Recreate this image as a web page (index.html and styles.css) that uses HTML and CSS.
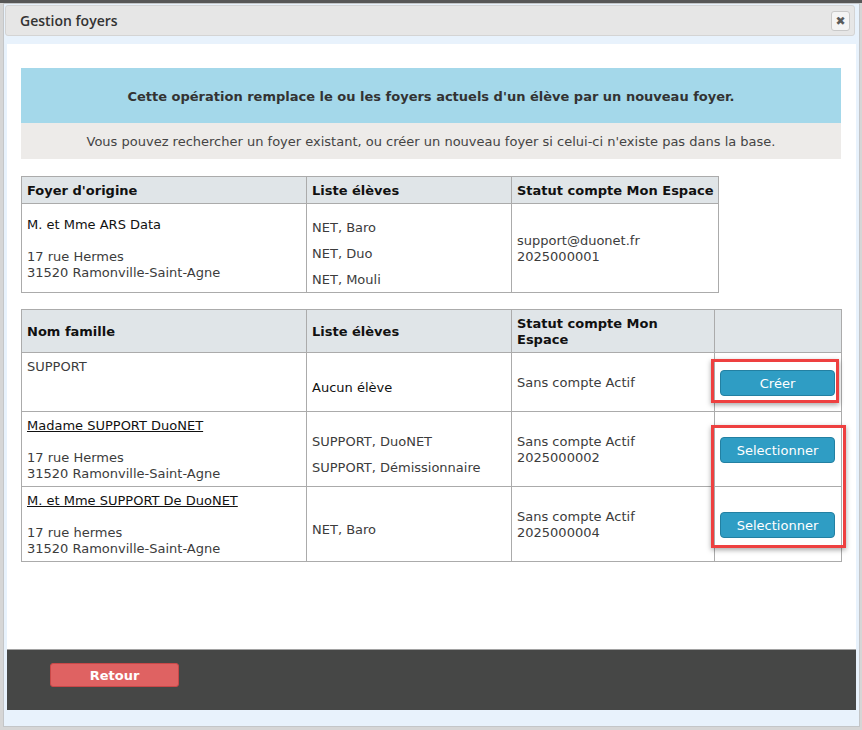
FILE: index.html
```html
<!DOCTYPE html>
<html lang="fr">
<head>
<meta charset="utf-8">
<title>Gestion foyers</title>
<link rel="stylesheet" href="styles.css">
</head>
<body>
<div class="dialog">
  <div class="titlebar">
    <span class="title">Gestion foyers</span>
    <button class="close" type="button">&#10006;</button>
  </div>
  <div class="content">
    <div class="banner-blue">Cette opération remplace le ou les foyers actuels d'un élève par un nouveau foyer.</div>
    <div class="banner-grey">Vous pouvez rechercher un foyer existant, ou créer un nouveau foyer si celui-ci n'existe pas dans la base.</div>

    <table class="grid origin">
      <colgroup><col class="w1"><col class="w2"><col class="w3"></colgroup>
      <thead>
        <tr><th>Foyer d'origine</th><th>Liste élèves</th><th class="nowrap">Statut compte Mon Espace</th></tr>
      </thead>
      <tbody>
        <tr>
          <td><span class="strong">M. et Mme ARS Data</span><br><br>17 rue Hermes<br>31520 Ramonville-Saint-Agne</td>
          <td class="list"><div>NET, Baro</div><div>NET, Duo</div><div>NET, Mouli</div></td>
          <td>support@duonet.fr<br>2025000001</td>
        </tr>
      </tbody>
    </table>

    <table class="grid results">
      <colgroup><col class="w1"><col class="w2"><col class="w3b"><col class="w4"></colgroup>
      <thead>
        <tr><th>Nom famille</th><th>Liste élèves</th><th>Statut compte Mon<br>Espace</th><th></th></tr>
      </thead>
      <tbody>
        <tr>
          <td class="top">SUPPORT</td>
          <td class="list"><div class="strong">Aucun élève</div></td>
          <td>Sans compte Actif</td>
          <td><button class="btn-blue" type="button">Créer</button></td>
        </tr>
        <tr>
          <td><a class="name" href="#">Madame SUPPORT DuoNET</a><br><br>17 rue Hermes<br>31520 Ramonville-Saint-Agne</td>
          <td class="list"><div>SUPPORT, DuoNET</div><div>SUPPORT, Démissionnaire</div></td>
          <td>Sans compte Actif<br>2025000002</td>
          <td><button class="btn-blue" type="button">Selectionner</button></td>
        </tr>
        <tr>
          <td><a class="name" href="#">M. et Mme SUPPORT De DuoNET</a><br><br>17 rue hermes<br>31520 Ramonville-Saint-Agne</td>
          <td class="list"><div>NET, Baro</div></td>
          <td>Sans compte Actif<br>2025000004</td>
          <td><button class="btn-blue" type="button">Selectionner</button></td>
        </tr>
      </tbody>
    </table>

    <div class="mark mark-one"></div>
    <div class="mark mark-two"></div>
  </div>
  <div class="footer">
    <button class="btn-retour" type="button">Retour</button>
  </div>
</div>
</body>
</html>
```

FILE: styles.css
```css
* { box-sizing: border-box; }

html { background: #d6d6d6; }

body {
  margin: 0;
  height: 730px;
  overflow: hidden;
  background: linear-gradient(#575757 0, #575757 3px, #d6d6d6 3px);
  font-family: "DejaVu Sans", Verdana, sans-serif;
  font-size: 13px;
  color: #3c3c3c;
}

.dialog {
  margin: 3px 0 0 3px;
  width: 857px;
  border: 1px solid #c4c6c8;
  background: #e8f2fc;
  padding: 1px 3px 16px 3px;
}

.titlebar {
  height: 31px;
  margin: 0 1px 8px -2px;
  background: #e6e6e6;
  border: 1px solid #d4d4d4;
  border-radius: 3px;
  display: flex;
  align-items: center;
  justify-content: space-between;
  padding: 0 4px 0 14px;
}

.title {
  font-family: "Open Sans", "DejaVu Sans", sans-serif;
  font-weight: 600;
  font-size: 14px;
  color: #333;
}

.close {
  width: 19px;
  height: 20px;
  padding: 0;
  background: #f4f4f4;
  border: 1px solid #c9c9c9;
  border-radius: 3px;
  color: #5a5a5a;
  font-size: 12px;
  line-height: 18px;
  font-family: "DejaVu Sans", sans-serif;
}

.content {
  position: relative;
  height: 605px;
  background: #fff;
  padding: 24px 15px 0 14px;
}

.banner-blue {
  height: 55px;
  background: #a4d8ea;
  display: flex;
  align-items: center;
  justify-content: center;
  font-weight: bold;
  color: #333;
  padding-top: 2px;
}

.banner-grey {
  height: 36px;
  background: #edebe9;
  display: flex;
  align-items: center;
  justify-content: center;
  color: #444;
}

.grid {
  border-collapse: collapse;
  table-layout: fixed;
}

.origin { width: 697px; margin-top: 17px; }
.results { width: 820px; margin-top: 16px; }

.w1 { width: 285px; }
.w2 { width: 205px; }
.w3 { width: 207px; }
.w3b { width: 203px; }
.w4 { width: 127px; }

.grid th,
.grid td {
  border: 1px solid #ababab;
  padding: 6px 5px 4px 5px;
  line-height: 16px;
  vertical-align: middle;
  text-align: left;
}

.grid th {
  background: #e0e5e8;
  color: #111;
  font-weight: bold;
}

.nowrap { white-space: nowrap; }

.grid td.top {
  vertical-align: top;
  padding-bottom: 36px;
}

.list div { margin-top: 10px; }

.strong { color: #111; }

.name { color: #111; text-decoration: underline; }

.btn-blue {
  width: 115px;
  height: 26px;
  background: #2f9dc4;
  border: 1px solid #2380a2;
  border-radius: 4px;
  color: #fff;
  font-family: "DejaVu Sans", Verdana, sans-serif;
  font-size: 13px;
  padding: 0;
}

.mark {
  position: absolute;
  border: 3px solid #ee4040;
  box-shadow: 0 2px 5px rgba(0, 0, 0, 0.35);
}

.mark-one { left: 704px; top: 315px; width: 128px; height: 44px; }
.mark-two { left: 704px; top: 381px; width: 135px; height: 123px; }

.footer {
  height: 61px;
  border-top: 1px solid #a2a2a2;
  background: #464746;
  padding: 13px 0 0 43px;
}

.btn-retour {
  width: 129px;
  height: 24px;
  background: #df6262;
  border: 1px solid #c94848;
  border-radius: 3px;
  color: #fff;
  font-family: "DejaVu Sans", Verdana, sans-serif;
  font-weight: bold;
  font-size: 13px;
  padding: 0;
}
```
